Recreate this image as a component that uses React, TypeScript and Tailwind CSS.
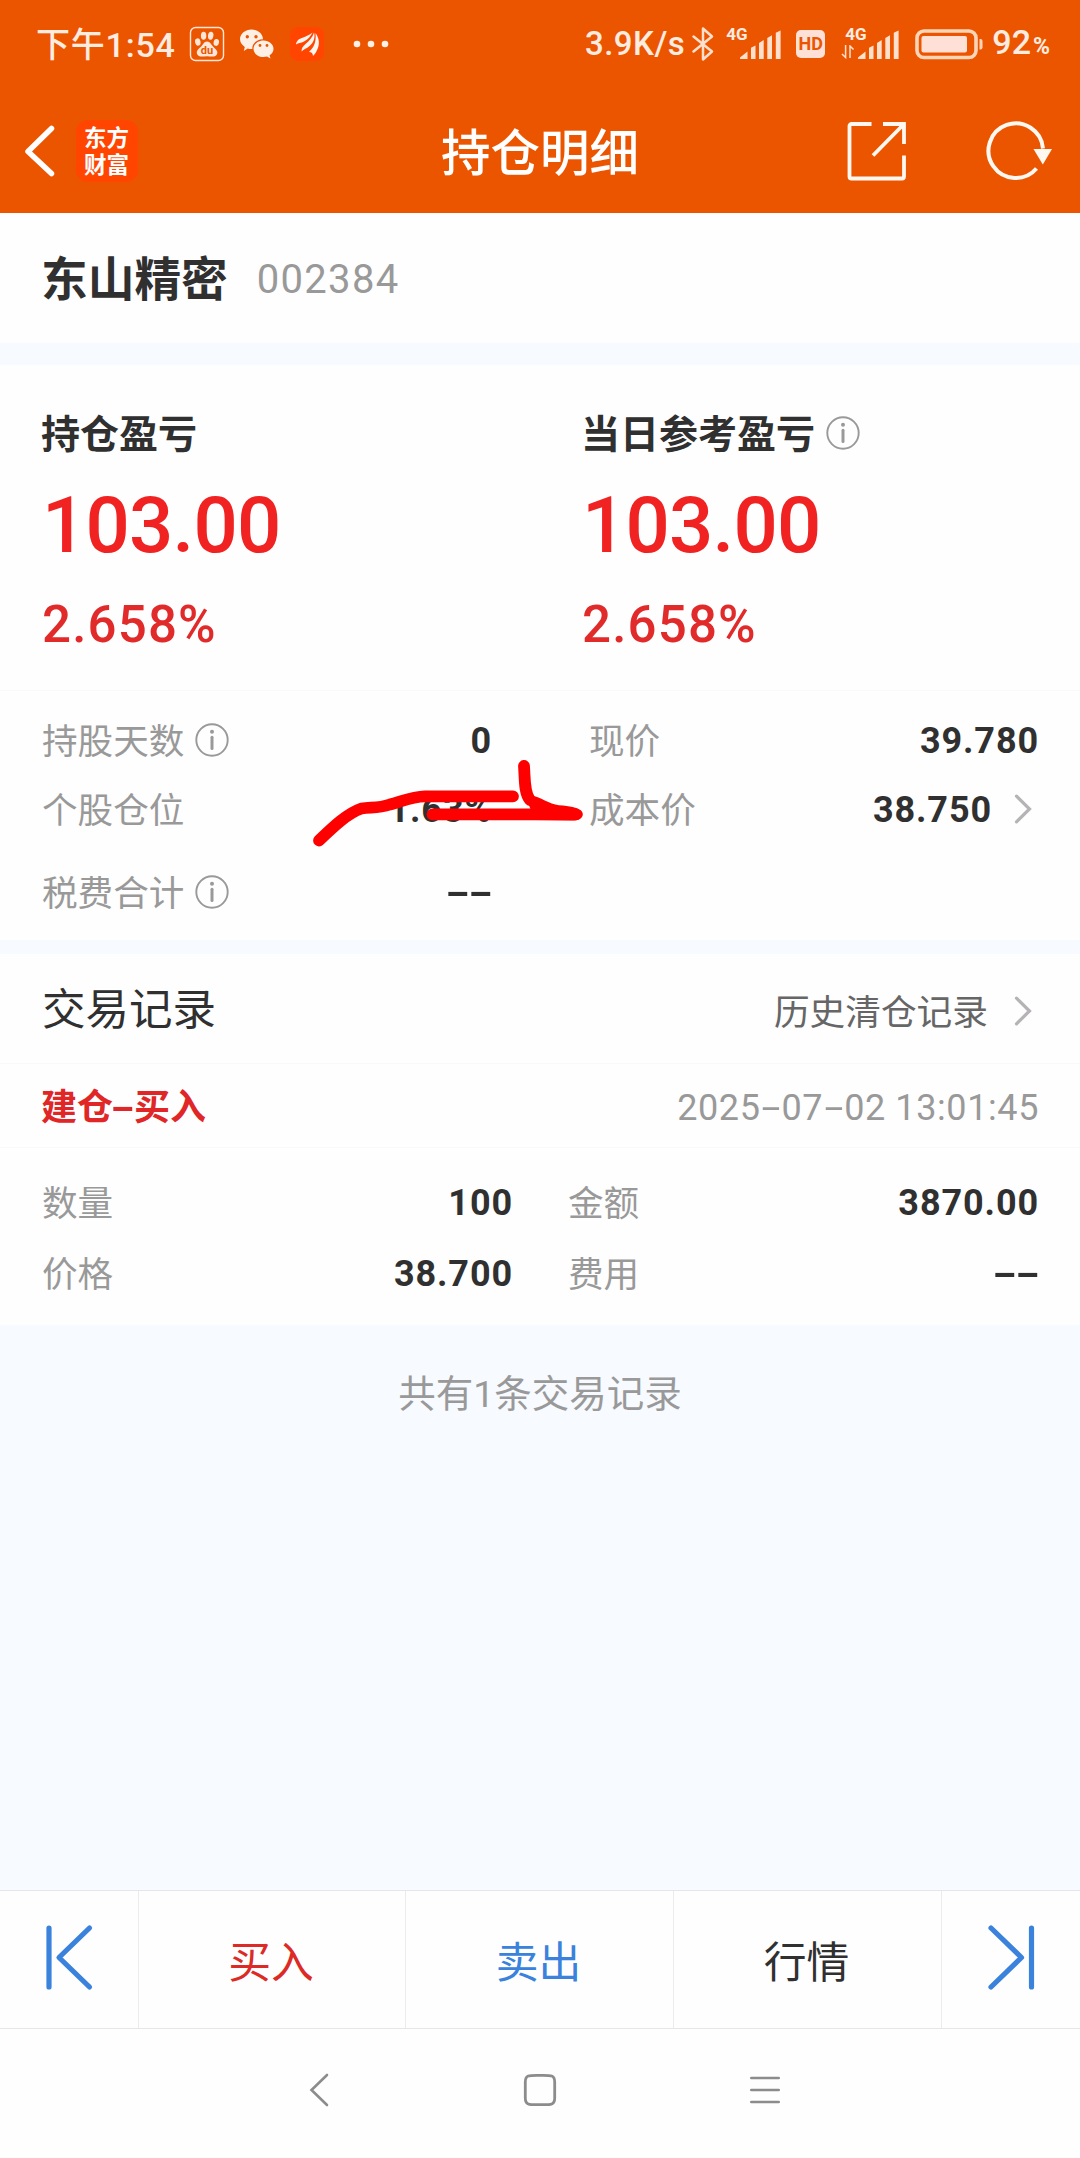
import React from "react";

const FONT = "font-[Roboto,'Noto_Sans_CJK_SC',sans-serif]";

/** Hyphens are drawn wide in the app's typeface. */
function Dash({ className = "" }: { className?: string }) {
  return (
    <span className={`inline-flex w-[21px] justify-center ${className}`}>
      <span className="inline-block scale-x-[1.9] tracking-normal">-</span>
    </span>
  );
}

function DoubleDash() {
  return (
    <span className="flex gap-[2px]">
      <Dash />
      <Dash />
    </span>
  );
}

function InfoIcon() {
  return (
    <svg width="34" height="34" viewBox="0 0 34 34" fill="none" stroke="#999999" className="shrink-0">
      <circle cx="17" cy="17" r="15.7" strokeWidth="1.9" />
      <circle cx="17" cy="8.7" r="2" fill="#999999" stroke="none" />
      <path d="M17 14.2V25.6" strokeWidth="3" strokeLinecap="round" />
    </svg>
  );
}

function Chevron() {
  return (
    <svg width="18" height="30" viewBox="0 0 18 30" fill="none" stroke="#b5b3b5" strokeWidth="3.2" strokeLinecap="round" className="shrink-0">
      <path d="M2.5 2.2 15.5 15 2.5 27.8" />
    </svg>
  );
}

function SignalBars() {
  return (
    <svg width="42" height="30" viewBox="0 0 42 30" fill="#ffe0cc">
      <path d="M0 29V27.5L7.5 21.5V29Z" />
      <path d="M11 17.8 15.5 15.5V29H11Z" />
      <path d="M19 13 23.7 10V29H19Z" />
      <path d="M27.3 8 32 5.3V29H27.3Z" />
      <path d="M35.8 2.8 40.6 0.6V29H35.8Z" />
    </svg>
  );
}

function StatusBar() {
  return (
    <div className="flex h-[88px] items-center pr-[30px] pl-[36px] text-[#ffece0]">
      <span className="w-[153px] pt-px text-[34px] leading-[34px] font-medium tracking-[0.8px] whitespace-nowrap">下午1:54</span>
      <svg width="36" height="36" viewBox="0 0 36 36" fill="none">
        <rect x="1.5" y="1.5" width="33" height="33" rx="5" stroke="#ffe6d6" strokeWidth="1.4" />
        <g fill="#ffe6d6">
          <ellipse cx="8.8" cy="16" rx="2.7" ry="3.7" transform="rotate(-12 8.8 16)" />
          <ellipse cx="14.6" cy="9.7" rx="2.7" ry="4" />
          <ellipse cx="21.7" cy="9.7" rx="2.7" ry="4" transform="rotate(8 21.7 9.7)" />
          <ellipse cx="27.3" cy="16.4" rx="2.7" ry="3.5" transform="rotate(10 27.3 16.4)" />
          <path d="M18 15.5c3 0 4 3 6.500 5.500c3.500 3.500 5 5 3 8c-2 2.700-5.500 1.200-9.500 1.200s-7 1.500-9.300-1.200c-2-3-.5-5 3-8c2.600-2.500 3.300-5.500 6.300-5.500z" />
        </g>
        <text x="18" y="27.600" textAnchor="middle" fontSize="11" fontWeight="700" fill="#ec5500" fontFamily="Roboto">du</text>
      </svg>
      <svg width="36" height="32" viewBox="0 0 36 32" className="ml-[14px]">
        <g fill="#fff0e6">
          <path d="M12.500 1.500c6.300 0 11.500 4.300 11.500 9.800c-6.500.2-10.700 4.300-10.700 9c0 .3 0 .5.1.7c-1.700.2-3.300-.1-4.700-.5L4.800 23l1-4.100C3 17.200 1 14.300 1 11.300C1 5.800 6.200 1.500 12.500 1.500z" />
          <path d="M24.500 12.500c5.500 0 10 3.700 10 8.300c0 2.600-1.500 4.900-3.900 6.500l.9 3.100l-3.500-1.900c-1.100.3-2.300.5-3.500.5c-5.500 0-10-3.600-10-8.200s4.500-8.300 10-8.300z" />
        </g>
        <g fill="#ec5500">
          <circle cx="8.300" cy="8.800" r="1.700" />
          <circle cx="17" cy="8.800" r="1.700" />
          <circle cx="21" cy="17.500" r="1.400" />
          <circle cx="28" cy="17.500" r="1.400" />
        </g>
      </svg>
      <svg width="34" height="34" viewBox="0 0 34 34" className="ml-[15px]">
        <rect width="34" height="34" rx="8" fill="#ff4500" />
        <g fill="#fff5ee">
          <path d="M6 17.500C6.500 13.500 9 12 12.500 10.800C16 9.500 19.500 8 22.500 5.500C20.500 9.500 18 12.500 14 14.500C11 16 8.500 16 6 17.500Z" />
          <path d="M11.500 24.500C11.500 21 13 19.300 15.500 17C19.500 13.500 22.500 10.500 24 5.500C25.500 11 23.500 15.500 19.500 19C16.500 21.700 14 22 11.500 24.500Z" />
          <path d="M23 29C22.800 26.300 21.800 25 19 25C23.500 20.500 26.500 16 25.500 6C29.500 11.500 29.800 17.500 27.300 22.500C26.300 25 25 27 23 29Z" />
        </g>
      </svg>
      <svg width="36" height="8" viewBox="0 0 36 8" fill="#fff0e6" className="ml-[29px]">
        <circle cx="4" cy="4" r="3.300" />
        <circle cx="18" cy="4" r="3.300" />
        <circle cx="32" cy="4" r="3.300" />
      </svg>
      <div className="ml-auto flex items-center">
        <span className="text-[33px] leading-[34px] font-medium tracking-[0.5px]">3.9K/s</span>
        <svg width="24" height="36" viewBox="0 0 24 36" fill="none" stroke="#ffe0cc" strokeWidth="2.500" strokeLinejoin="round" strokeLinecap="round" className="ml-[6px]">
          <path d="M2.500 10.500 21 25.500 12 33.500V2.500L21 10.500 2.500 25.500" />
        </svg>
        <div className="relative ml-[25px] h-[32px] w-[42px] pt-[2px]">
          <span className="absolute top-[-2px] left-[-14px] text-[17px] leading-[16px] font-bold">4G</span>
          <SignalBars />
        </div>
        <span className="ml-[14px] flex h-[28px] w-[29px] items-center justify-center rounded-[5px] bg-[#ffe0d6] text-[18px] leading-none font-bold text-[#ec5500]">HD</span>
        <div className="relative ml-[33px] h-[32px] w-[42px] pt-[2px]">
          <span className="absolute top-[-2px] left-[-13px] text-[17px] leading-[16px] font-bold">4G</span>
          <svg width="14" height="14" viewBox="0 0 14 14" fill="none" stroke="#ffe0cc" strokeWidth="1.500" className="absolute top-[17px] left-[-17px]">
            <path d="M4.600 0V12.500L1 9M9 13V1L12.500 4.500" />
          </svg>
          <SignalBars />
        </div>
        <svg width="69" height="32" viewBox="0 0 69 32" className="ml-[15px]">
          <rect x="2" y="3" width="59" height="26.500" rx="7" fill="none" stroke="#ffd5b8" strokeWidth="3.600" />
          <rect x="6.500" y="8" width="45.500" height="16.500" rx="2" fill="#ffe0d6" />
          <path d="M64.500 11h1a2 2 0 0 1 2 2v6.500a2 2 0 0 1-2 2h-1z" fill="#ffd5b8" />
        </svg>
        <span className="ml-[8px] flex items-baseline pt-px text-[34px] leading-[34px] font-medium">
          92<span className="ml-[2px] text-[23px] font-bold">%</span>
        </span>
      </div>
    </div>
  );
}

function TitleBar() {
  return (
    <div className="grid h-[125px] grid-cols-[1fr_auto_1fr] items-center text-white">
      <div className="flex items-center pl-[22px]">
        <svg width="36" height="54" viewBox="0 0 36 54" fill="none" stroke="#ffffff" strokeWidth="5.500" strokeLinecap="round" strokeLinejoin="round">
          <path d="M29.500 4.500 6 27.500 29.500 49.500" />
        </svg>
        <div className="ml-[18px] flex h-[62px] w-[62px] flex-col items-center justify-center rounded-[12px] bg-[#ff4500] pt-[2px] pr-[1px] text-[22.500px] leading-[27px] font-bold">
          <span>东方</span>
          <span>财富</span>
        </div>
      </div>
      <h1 className="pt-[7px] text-[49.500px] leading-[60px] font-medium">持仓明细</h1>
      <div className="flex items-center justify-end pr-[26px]">
        <svg width="60" height="60" viewBox="0 0 60 60" fill="none" stroke="#fff8f0" strokeWidth="3.800">
          <path d="M24.500 3H4.500A2 2 0 0 0 2.500 5V55.500A2 2 0 0 0 4.500 57.500H55A2 2 0 0 0 57 55.500V34.500" />
          <path d="M36 3H57V23M57 3 26 34.500" />
        </svg>
        <svg width="68" height="60" viewBox="0 0 68 60" fill="none" className="ml-[79px]">
          <path d="M50.500 47.500A27.300 27.300 0 1 1 57 27.500" stroke="#fff8f0" strokeWidth="4" />
          <path d="M47.500 28H66L56.800 43.500Z" fill="#fff8f0" />
        </svg>
      </div>
    </div>
  );
}

function Profit({ title, info }: { title: string; info?: boolean }) {
  return (
    <div className="pl-[42px]">
      <div className="flex h-[38px] items-center gap-[11px]">
        <span className="-ml-px pt-px text-[39px] leading-[38px] font-bold text-[#303030]">{title}</span>
        {info && (
          <span className="pb-[3px]">
            <InfoIcon />
          </span>
        )}
      </div>
      <div className="mt-[34px] text-[78px] leading-[78px] font-medium tracking-[-0.800px] text-[#f02222]">103.00</div>
      <div className="mt-[34px] text-[51px] leading-[51px] font-medium tracking-[1.200px] text-[#e12a2a]">2.658%</div>
    </div>
  );
}

function Field({
  label,
  value,
  info,
  arrow,
  className,
}: {
  label: string;
  value: React.ReactNode;
  info?: boolean;
  arrow?: boolean;
  className: string;
}) {
  return (
    <div className={`flex h-[40px] items-center text-[36px] leading-[40px] ${className}`}>
      <span className="pt-[3px] text-[35.600px] text-[#999999]">{label}</span>
      {info && (
        <span className="ml-[11px]">
          <InfoIcon />
        </span>
      )}
      <span className="-mr-px ml-auto pt-px font-bold tracking-[0.900px] text-[#303030]">{value}</span>
      {arrow && (
        <span className="ml-[23px] pr-[6px]">
          <Chevron />
        </span>
      )}
    </div>
  );
}

function Scribble() {
  return (
    <svg width="290" height="100" viewBox="310 750 290 100" className="absolute top-[59px] left-[310px]" fill="none" stroke="#ff0000" strokeLinecap="round" strokeLinejoin="round">
      <path d="M319 840.500C333 827 347 813.500 361.500 808.500C371 807 378 808.500 390 804.500C404 800.500 413 796.500 425 796.300H513" strokeWidth="11.800" />
      <path d="M432.500 814.300H576" strokeWidth="11.800" />
      <path d="M524 766C525 779 524 793 530 800" strokeWidth="11.800" />
      <path d="M530 795C541 797 549 804 559 805.200C570 806 577 807 581.500 811C585.500 816 580 821 573 820.500L535 820L528 803Z" fill="#ff0000" stroke="none" />
    </svg>
  );
}

function Action({ children, className }: { children: React.ReactNode; className: string }) {
  return (
    <button className={`flex items-center justify-center border-r border-[#ebebeb] pt-[6px] pr-[2px] text-[42.800px] leading-[50px] ${className}`}>
      {children}
    </button>
  );
}

export default function App() {
  return (
    <div className={`flex h-[2158px] w-[1080px] flex-col overflow-hidden bg-[#fefefe] ${FONT}`}>
      <header className="h-[213px] shrink-0 bg-[#ec5500]">
        <StatusBar />
        <TitleBar />
      </header>

      <section className="flex h-[130px] shrink-0 items-center pt-[4px] pl-[41px]">
        <h2 className="text-[46.700px] leading-[60px] font-bold text-[#303030]">东山精密</h2>
        <span className="ml-[29px] text-[40px] leading-[60px] tracking-[1.300px] text-[#999999]">002384</span>
      </section>

      <div className="h-[22px] shrink-0 bg-[#f7faff]" />

      <section className="grid h-[325px] shrink-0 grid-cols-2 pt-[50px]">
        <Profit title="持仓盈亏" />
        <Profit title="当日参考盈亏" info />
      </section>

      <section className="relative h-[250px] shrink-0 border-t border-[#f9f9f9] pt-[29px]">
        <div className="grid grid-cols-[449px_449px] justify-between pr-[42px] pl-[42px]">
          <Field className="" label="持股天数" info value="0" />
          <Field className="" label="现价" value="39.780" />
          <Field className="mt-[29px]" label="个股仓位" value="1.63%" />
          <Field className="mt-[29px]" label="成本价" value="38.750" arrow />
          <Field className="mt-[43px]" label="税费合计" info value={<DoubleDash />} />
        </div>
        <Scribble />
      </section>

      <div className="h-[14px] shrink-0 bg-[#f7faff]" />

      <section className="flex h-[110px] shrink-0 items-center justify-between border-b border-[#f9f9f9] pt-[5px] pr-[48px] pl-[42px]">
        <h3 className="text-[43.500px] leading-[60px] text-[#303030]">交易记录</h3>
        <div className="flex items-center gap-[26px]">
          <span className="pt-[4px] text-[35.700px] leading-[40px] text-[#666666]">历史清仓记录</span>
          <Chevron />
        </div>
      </section>

      <section className="flex h-[84px] shrink-0 items-center justify-between border-b border-[#f9f9f9] pt-[4px] pr-[41px] pl-[41px]">
        <span className="text-[36px] leading-[40px] font-bold text-[#e02626]">
          建仓
          <Dash />
          买入
        </span>
        <span className="text-[36px] leading-[40px] tracking-[0.600px] text-[#999999]">
          2025
          <Dash />
          07
          <Dash />
          02 13:01:45
        </span>
      </section>

      <section className="grid h-[177px] shrink-0 grid-cols-[470px_470px] content-start justify-between gap-y-[31px] px-[42px] pt-[34px]">
        <Field className="" label="数量" value="100" />
        <Field className="" label="金额" value="3870.00" />
        <Field className="" label="价格" value="38.700" />
        <Field className="" label="费用" value={<DoubleDash />} />
      </section>

      <main className="flex-1 bg-[#f7faff] pt-[48px] text-center text-[37.500px] leading-[42px] text-[#999999]">
        共有1条交易记录
      </main>

      <div className="grid h-[139px] shrink-0 grid-cols-[139px_267px_268px_268px_138px] border-y border-[#e6e6e6]">
        <button className="flex items-center justify-center border-r border-[#ebebeb] pb-[3px]">
          <svg width="50" height="68" viewBox="0 0 50 68" fill="none" stroke="#3a82dc" strokeWidth="5.200" strokeLinecap="round" strokeLinejoin="round">
            <path d="M5 4V63M45.500 4 15 33.500 45.500 63" />
          </svg>
        </button>
        <Action className="text-[#dc2a26]">买入</Action>
        <Action className="text-[#3a82dc]">卖出</Action>
        <Action className="text-[#303030]">行情</Action>
        <button className="flex items-center justify-center pb-[3px]">
          <svg width="50" height="68" viewBox="0 0 50 68" fill="none" stroke="#3a82dc" strokeWidth="5.200" strokeLinecap="round" strokeLinejoin="round">
            <path d="M45.500 4V63M5 4 35.500 33.500 5 63" />
          </svg>
        </button>
      </div>

      <nav className="flex h-[129px] shrink-0 items-center pb-[7px] pl-[308px]">
        <svg width="22" height="36" viewBox="0 0 22 36" fill="none" stroke="#8c8c8c" strokeWidth="2.600" strokeLinecap="round">
          <path d="M19 3 3.500 18 19 33" />
        </svg>
        <svg width="36" height="36" viewBox="0 0 36 36" fill="none" stroke="#8c8c8c" strokeWidth="2.800" className="ml-[192px]">
          <path d="M18 3.300C28 3.300 32.700 2.500 32.700 10V26C32.700 33.500 28 32.700 18 32.700S3.300 33.500 3.300 26V10C3.300 2.500 8 3.300 18 3.300Z" />
        </svg>
        <svg width="34" height="30" viewBox="0 0 34 30" fill="none" stroke="#8c8c8c" strokeWidth="2.600" strokeLinecap="round" className="ml-[190px]">
          <path d="M3.300 3H30.700M3.300 15H30.700M3.300 27H30.700" />
        </svg>
      </nav>
    </div>
  );
}
